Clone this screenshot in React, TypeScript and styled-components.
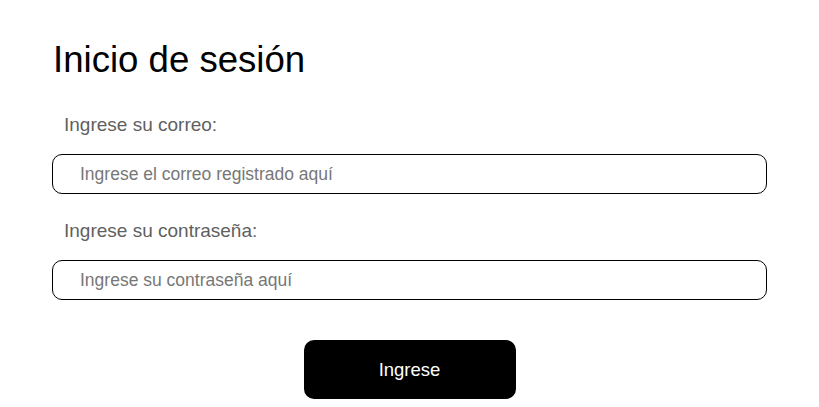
import React from "react";
import styled, { createGlobalStyle } from "styled-components";

const Global = createGlobalStyle`
  html, body { margin: 0; padding: 0; background: #ffffff; }
  body { font-family: "Liberation Sans", Arial, sans-serif; }
  * { box-sizing: border-box; }
`;

const Page = styled.main`
  display: flex;
  flex-direction: column;
  padding: 39px 52px 0 52px;
`;

const Title = styled.h1`
  margin: 0 0 0 1px;
  font-size: 36.6px;
  font-weight: 400;
  color: #000;
  line-height: 41px;
`;

const Form = styled.form`
  display: flex;
  flex-direction: column;
  margin-top: 34px;
`;

const Field = styled.div`
  display: flex;
  flex-direction: column;
  margin-bottom: 26px;
`;

const Label = styled.label`
  font-size: 19px;
  line-height: 22px;
  color: #5f5f5f;
  margin: 0 0 18px 12px;
`;

const Input = styled.input`
  height: 40px;
  width: 100%;
  border: 1px solid #000;
  border-radius: 10px;
  padding: 0 0 0 27px;
  font-family: "Liberation Sans", Arial, sans-serif;
  font-size: 17.5px;
  color: #000;
  background: #fff;
  outline: none;
  &::placeholder { color: #777; }
`;

const Actions = styled.div`
  display: flex;
  justify-content: center;
  margin-top: 14px;
`;

const Button = styled.button`
  width: 212px;
  height: 59px;
  border: none;
  border-radius: 10px;
  background: #000;
  color: #fff;
  font-family: "Liberation Sans", Arial, sans-serif;
  font-size: 18.5px;
  cursor: pointer;
`;

export default function App() {
  return (
    <>
      <Global />
      <Page>
        <Title>Inicio de sesión</Title>
        <Form onSubmit={(e) => e.preventDefault()}>
          <Field>
            <Label htmlFor="correo">Ingrese su correo:</Label>
            <Input id="correo" type="email" placeholder="Ingrese el correo registrado aquí" />
          </Field>
          <Field>
            <Label htmlFor="clave">Ingrese su contraseña:</Label>
            <Input id="clave" type="password" placeholder="Ingrese su contraseña aquí" />
          </Field>
          <Actions>
            <Button type="submit">Ingrese</Button>
          </Actions>
        </Form>
      </Page>
    </>
  );
}
